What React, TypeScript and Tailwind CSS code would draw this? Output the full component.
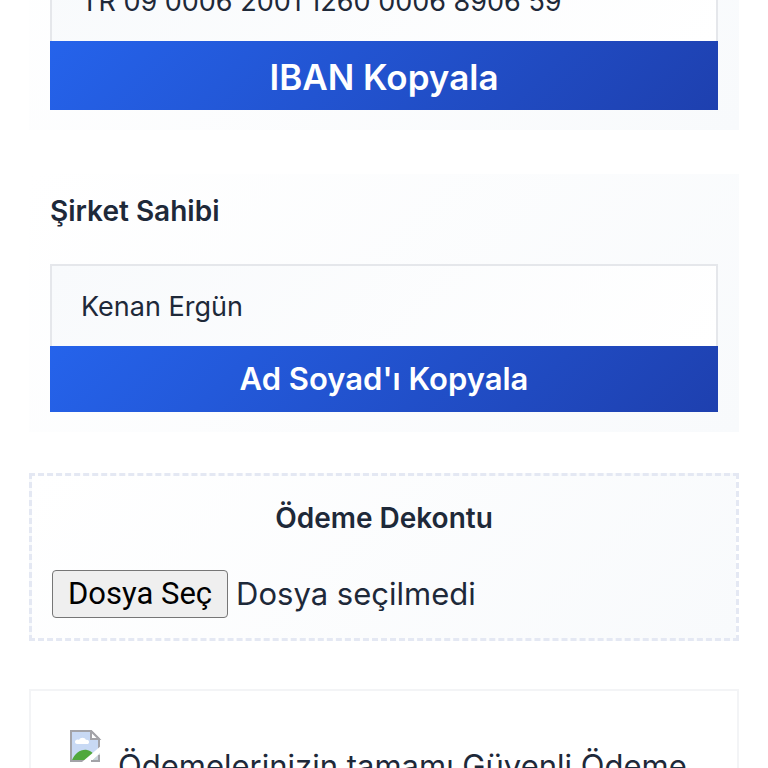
import React, { useState } from 'react';

interface CopyFieldProps {
  id: string;
  label: string;
  value: string;
  buttonText: string;
  large?: boolean;
}

const CopyField: React.FC<CopyFieldProps> = ({ id, label, value, buttonText, large }) => {
  const handleCopy = () => {
    navigator.clipboard?.writeText(value);
  };

  return (
    <section className="bg-[linear-gradient(135deg,#ffffff,#f8fafc)] px-[21px] pt-4 pb-5">
      <label htmlFor={id} className="block text-[28px] leading-[42px] font-semibold text-gray-800">
        {label}
      </label>
      <input
        id={id}
        type="text"
        readOnly
        value={value}
        className="mt-8 block h-[82px] w-full border-2 border-b-0 border-gray-200 bg-[linear-gradient(135deg,#f8fafc,#ffffff)] px-[29px] text-[27px] text-gray-800 outline-none"
      />
      <button
        type="button"
        onClick={handleCopy}
        className={`block w-full cursor-pointer bg-[linear-gradient(135deg,#2563eb,#1e40af)] font-semibold text-white ${
          large ? 'h-[69px] pt-1 text-[35px]' : 'h-[66px] text-[31px]'
        }`}
      >
        {buttonText}
      </button>
    </section>
  );
};

const BrokenImage = () => (
  <svg className="h-8 w-8 shrink-0" viewBox="0 0 32 32" role="img" aria-label="Güvenli ödeme">
    <path d="M1 1h20l8 8v22H1z" fill="#c8d9f4" />
    <path d="M5 12c0-2 2-3 4-2 1-3 6-3 7 0 3-1 4 3 2 4H7c-1 0-2-1-2-2z" fill="#fff" />
    <path d="M2 30c3-7 9-11 15-10 5 1 8 5 10 10z" fill="#50a83c" />
    <path d="M1 1h20l8 8v22H1z" fill="none" stroke="#a3a3a8" strokeWidth="2" />
    <path d="M21 1v8h8z" fill="#fff" stroke="#a3a3a8" strokeWidth="2" />
    <path d="M12 32 32 15v7L21 32z" fill="#fff" />
    <path d="M21 32 30 23v9z" fill="#c9d3dc" />
    <path d="M21 31h8v-6" fill="none" stroke="#a3a3a8" strokeWidth="2" />
  </svg>
);

export default function App() {
  const [fileName, setFileName] = useState('');

  return (
    <div className="h-screen overflow-hidden bg-white font-['Inter',sans-serif]">
      <main className="-mt-[131px] flex flex-col px-[29px]">
        <CopyField
          id="iban"
          label="IBAN"
          value="TR 09 0006 2001 1260 0006 8906 59"
          buttonText="IBAN Kopyala"
          large
        />

        <div className="mt-11">
          <CopyField id="owner" label="Şirket Sahibi" value="Kenan Ergün" buttonText="Ad Soyad'ı Kopyala" />
        </div>

        <section className="mt-[41px] border-3 border-dashed border-[#e4e8f3] bg-[linear-gradient(135deg,#ffffff,#f8fafc)] p-5">
          <h2 className="text-center text-[28px] leading-11 font-semibold text-gray-800">Ödeme Dekontu</h2>
          <label htmlFor="receipt" className="mt-[30px] flex cursor-pointer items-center gap-2 text-[31px] leading-[46px] text-gray-800">
            <span className="rounded-sm border border-[#767676] bg-[#efefef] px-[15px] font-['Roboto',sans-serif] text-black">
              Dosya Seç
            </span>
            {fileName || 'Dosya seçilmedi'}
          </label>
          <input
            id="receipt"
            type="file"
            className="sr-only"
            onChange={(e) => setFileName(e.target.files?.[0]?.name ?? '')}
          />
        </section>

        <section className="mt-12 flex items-start gap-4 border-2 border-gray-100 bg-white px-[39px] py-[39px]">
          <BrokenImage />
          <p className="pt-3 text-[31px] leading-12 text-gray-800">Ödemelerinizin tamamı Güvenli Ödeme</p>
        </section>
      </main>
    </div>
  );
}
